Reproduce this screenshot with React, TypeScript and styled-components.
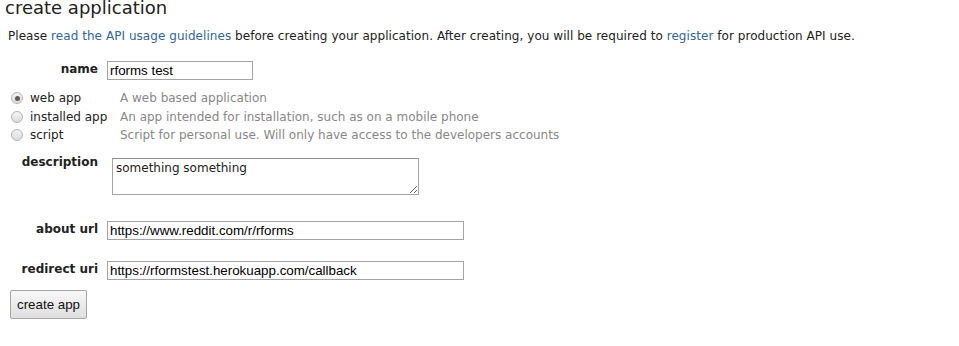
import React from "react";
import styled, { createGlobalStyle } from "styled-components";

const Global = createGlobalStyle`
  html, body { margin: 0; padding: 0; background: #fff; }
  body { font-family: "DejaVu Sans", Verdana, sans-serif; font-size: 12px; color: #222; }
`;

const Page = styled.div`
  padding: 0 0 0 5px;
`;

const Title = styled.h1`
  font-size: 18px;
  line-height: 16px;
  font-weight: normal;
  margin: 0;
  color: #222;
`;

const Intro = styled.p`
  margin: 13px 0 0 3px;
  font-size: 12px;
  letter-spacing: 0.05px;
`;

const Link = styled.a`
  color: #369;
  text-decoration: none;
`;

const Form = styled.form`
  display: flex;
  flex-direction: column;
  align-items: flex-start;
`;

const Row = styled.div<{ $top: number }>`
  display: flex;
  align-items: flex-start;
  margin-top: ${(p) => p.$top}px;
`;

const Label = styled.label`
  width: 93px;
  text-align: right;
  font-weight: bold;
  padding-top: 1px;
  margin-right: 9px;
`;

const TextInput = styled.input<{ $w: number }>`
  box-sizing: border-box;
  width: ${(p) => p.$w}px;
  height: 19px;
  border: 1px solid #a4a4a4;
  padding: 1px 2px;
  margin: 0;
  font-family: "Liberation Sans", Arial, sans-serif;
  font-size: 13.333px;
  color: #000;
  outline: none;
`;

const TextArea = styled.textarea`
  box-sizing: border-box;
  width: 307px;
  height: 37px;
  margin: 4px 0 0 5px;
  border: 1px solid #a4a4a4;
  border-top-color: #8e8e8e;
  padding: 2px 3px;
  font-family: "DejaVu Sans", Verdana, sans-serif;
  font-size: 12px;
  color: #222;
  outline: none;
  resize: both;
`;

const RadioList = styled.div`
  display: grid;
  grid-template-columns: 110px auto;
  margin: 9px 0 0 5px;
  row-gap: 0;
`;

const RadioLabel = styled.label`
  display: flex;
  align-items: center;
  gap: 7px;
  height: 18.5px;
  color: #222;
`;

const RadioDot = styled.input`
  appearance: none;
  box-sizing: border-box;
  width: 12px;
  height: 12px;
  margin: 0 0 0 1px;
  border-radius: 50%;
  border: 1px solid #b4b4b4;
  background: linear-gradient(#f4f4f4, #dcdcdc);
  position: relative;
  &:checked::after {
    content: "";
    position: absolute;
    left: 2.5px;
    top: 2.5px;
    width: 5px;
    height: 5px;
    border-radius: 50%;
    background: #5a5a5a;
  }
`;

const RadioDesc = styled.span`
  display: flex;
  align-items: center;
  height: 18.5px;
  color: #888;
`;

const Button = styled.button`
  margin: 10px 0 0 5px;
  height: 29px;
  padding: 0 6px;
  font-family: "Liberation Sans", Arial, sans-serif;
  font-size: 13.333px;
  color: #111;
  border: 1px solid #a6a6a6;
  border-radius: 2px;
  background: linear-gradient(#f8f8f8, #dedede);
`;

const types = [
  { id: "web", label: "web app", desc: "A web based application", checked: true },
  { id: "installed", label: "installed app", desc: "An app intended for installation, such as on a mobile phone", checked: false },
  { id: "script", label: "script", desc: "Script for personal use. Will only have access to the developers accounts", checked: false },
];

export default function App() {
  return (
    <Page>
      <Global />
      <Title>create application</Title>
      <Intro>
        Please <Link href="#">read the API usage guidelines</Link> before creating your application. After creating, you will be required to <Link href="#">register</Link> for production API use.
      </Intro>
      <Form onSubmit={(e) => e.preventDefault()}>
        <Row $top={18}>
          <Label>name</Label>
          <TextInput $w={146} defaultValue="rforms test" />
        </Row>
        <RadioList>
          {types.map((t) => (
            <React.Fragment key={t.id}>
              <RadioLabel>
                <RadioDot type="radio" name="type" defaultChecked={t.checked} />
                {t.label}
              </RadioLabel>
              <RadioDesc>{t.desc}</RadioDesc>
            </React.Fragment>
          ))}
        </RadioList>
        <Row $top={9}>
          <Label>description</Label>
          <TextArea defaultValue="something something" />
        </Row>
        <Row $top={26}>
          <Label>about url</Label>
          <TextInput $w={357} defaultValue="https://www.reddit.com/r/rforms" />
        </Row>
        <Row $top={21}>
          <Label>redirect uri</Label>
          <TextInput $w={357} defaultValue="https://rformstest.herokuapp.com/callback" />
        </Row>
        <Button type="button">create app</Button>
      </Form>
    </Page>
  );
}
